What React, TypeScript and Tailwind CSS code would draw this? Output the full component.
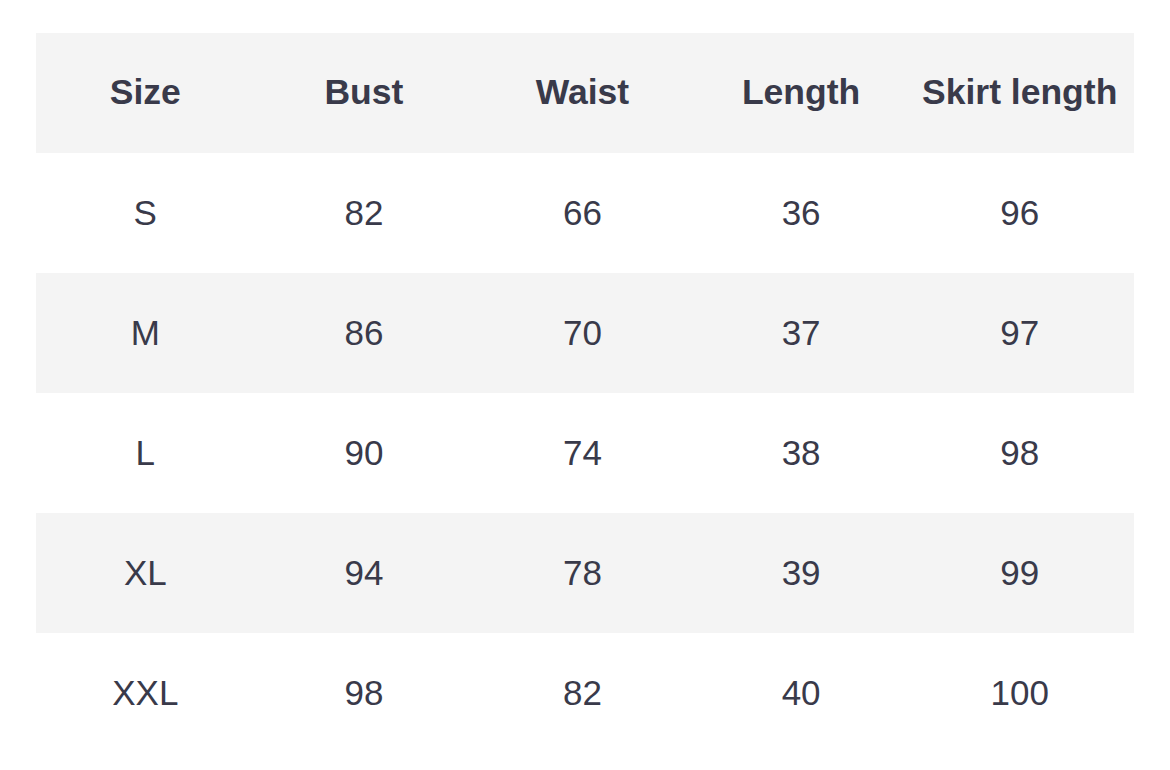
const headers = ["Size", "Bust", "Waist", "Length", "Skirt length"];

const rows = [
  ["S", "82", "66", "36", "96"],
  ["M", "86", "70", "37", "97"],
  ["L", "90", "74", "38", "98"],
  ["XL", "94", "78", "39", "99"],
  ["XXL", "98", "82", "40", "100"],
];

function App() {
  return (
    <div className="min-h-screen bg-white pt-[33px] pl-[36px] font-['Liberation_Sans',Arial,sans-serif] text-[#393a4a]">
      <div className="w-[1098px]">
        <div className="grid grid-cols-5 h-[120px] pr-[5px] bg-[#f4f4f4] items-center">
          {headers.map((h) => (
            <div key={h} className="text-center text-[35.5px] font-bold">
              {h}
            </div>
          ))}
        </div>
        {rows.map((row, i) => (
          <div
            key={row[0]}
            className={`grid grid-cols-5 h-[120px] pr-[5px] items-center ${
              i % 2 === 1 ? "bg-[#f4f4f4]" : "bg-white"
            }`}
          >
            {row.map((cell, j) => (
              <div key={j} className="text-center text-[35px]">
                {cell}
              </div>
            ))}
          </div>
        ))}
      </div>
    </div>
  );
}

export default App;
